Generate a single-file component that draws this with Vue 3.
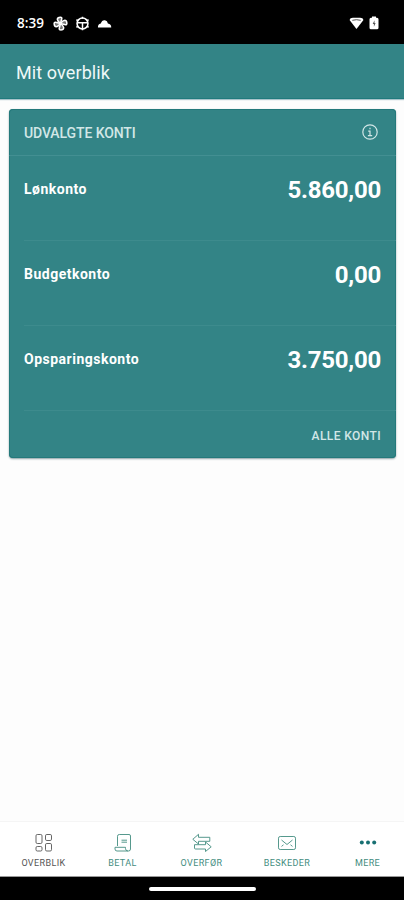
<template>
  <div class="screen">
    <header class="status-bar">
      <span class="clock">8:39</span>
      <svg class="status-icon fan" viewBox="0 0 16 16">
        <g fill="#777" stroke="#fff" stroke-width="1.6" stroke-linejoin="round">
          <path v-for="angle in [0, 90, 180, 270]" :key="angle" :transform="`rotate(${angle} 8 8)`" d="M8 8L9.4 2.6Q9.5 1.3 8 1.2Q4.6 1.2 4.6 3.6Q4.7 5.4 8 8" />
        </g>
      </svg>
      <svg class="status-icon wheel" viewBox="0 0 16 16">
        <circle cx="8" cy="8" r="5.8" fill="none" stroke="#fff" stroke-width="1.7" />
        <path d="M2.5 7.2h11M8 8v5.5M8 .8v2M1.5 4l1.7 1M14.5 4l-1.7 1M1.5 12l1.7-1M14.5 12l-1.7-1M8 13v2.2" fill="none" stroke="#fff" stroke-width="1.6" />
      </svg>
      <svg class="status-icon cloud" viewBox="0 0 16 16">
        <path d="M1 12.2Q.8 8.7 4 8Q5.3 4 8.5 4.5Q11.2 5 11.6 8Q15.2 8.4 15.2 12.2z" fill="#fff" />
      </svg>
      <span class="spacer"></span>
      <svg class="wifi" viewBox="0 0 16 14">
        <path d="M.5 3.3Q1 .8 4 .8H12Q15 .8 15.5 3.3L8 13z" fill="#fff" />
        <path d="M3.5 3.6Q8 2.2 12.5 3.6" fill="none" stroke="#444" stroke-width="1" />
      </svg>
      <svg class="battery" viewBox="0 0 10 14">
        <path d="M3 .5h4v1.2h1q1.5 0 1.5 1.5v8.6q0 1.5-1.5 1.5H2q-1.5 0-1.5-1.5V3.2q0-1.5 1.5-1.5h1z" fill="#fff" />
        <path d="M5.5 4.2L3.7 8h1.2v2.8L6.6 7H5.5z" fill="#555" />
      </svg>
    </header>

    <div class="title-bar">
      <h1>Mit overblik</h1>
    </div>

    <main class="content">
      <section class="card">
        <div class="card-header">
          <h2>UDVALGTE KONTI</h2>
          <svg class="info" viewBox="0 0 16 16">
            <circle cx="8" cy="8" r="7.2" />
            <path d="M8 3.7v1.5M6.2 7.1H8v4.4M5.9 11.6h4.3" />
          </svg>
        </div>
        <div v-for="account in accounts" :key="account.name" class="account">
          <span class="name">{{ account.name }}</span>
          <span class="amount">{{ account.amount }}</span>
        </div>
        <div class="card-footer">
          <a>ALLE KONTI</a>
        </div>
      </section>
    </main>

    <nav class="tabs">
      <a v-for="tab in tabs" :key="tab.id" class="tab" :class="{ active: tab.id === activeTab }">
        <svg class="tab-icon" viewBox="0 0 20 20">
          <g v-if="tab.id === 'overview'">
            <rect x="2" y="1.5" width="6" height="9" rx="1.3" />
            <rect x="11.5" y="1.5" width="6" height="6" rx="1.3" />
            <rect x="2" y="13.5" width="6" height="4.5" rx="1.3" />
            <rect x="11.5" y="10.5" width="6" height="7.5" rx="1.3" />
          </g>
          <g v-else-if="tab.id === 'pay'">
            <path d="M4.5 13V3.3q0-1.8 1.8-1.8H16q1.5 0 1.5 1.5v13q0 2-2 2H4q-2 0-2-2v-1.7h10.5v1.3q0 2.2 2.4 2.4" />
            <path d="M8.5 7.2h5.5M8.5 9.2h5.5" />
          </g>
          <g v-else-if="tab.id === 'transfer'">
            <path d="M6.5 1.3L.8 6.3L6.5 11V8.3H17.8V4.3H6.5z" />
            <path d="M13.5 9L19.2 13.8L13.5 18.5V16H3.5q-1 0-1-1v-3.3h11z" />
          </g>
          <g v-else-if="tab.id === 'messages'">
            <rect x="1.5" y="3.5" width="17" height="13" rx="1.7" />
            <path d="M4.5 7l5.5 4.5L15.5 7M4.5 13.4l2-1.6M15.5 13.4l-2-1.6" />
          </g>
          <g v-else class="dots">
            <circle cx="3.8" cy="9.5" r="2" />
            <circle cx="10" cy="9.5" r="2" />
            <circle cx="16.2" cy="9.5" r="2" />
          </g>
        </svg>
        <span class="tab-label">{{ tab.label }}</span>
      </a>
    </nav>

    <div class="gesture-bar">
      <span class="handle"></span>
    </div>
  </div>
</template>

<script setup>
import { ref } from 'vue'

const activeTab = ref('overview')

const accounts = [
  { name: 'Lønkonto', amount: '5.860,00' },
  { name: 'Budgetkonto', amount: '0,00' },
  { name: 'Opsparingskonto', amount: '3.750,00' }
]

const tabs = [
  { id: 'overview', label: 'OVERBLIK' },
  { id: 'pay', label: 'BETAL' },
  { id: 'transfer', label: 'OVERFØR' },
  { id: 'messages', label: 'BESKEDER' },
  { id: 'more', label: 'MERE' }
]
</script>

<style>
body {
  margin: 0;
  background: #fdfdfd;
}
</style>

<style scoped>
.screen {
  display: flex;
  flex-direction: column;
  height: 100vh;
  overflow: hidden;
  background: #fdfdfd;
  font-family: Roboto, sans-serif;
  color: #fff;
}

.status-bar {
  display: flex;
  align-items: center;
  flex: 0 0 44px;
  box-sizing: border-box;
  padding: 2px 25px 0 17px;
  background: #000;
}

.clock {
  width: 36px;
  font-family: "Open Sans", sans-serif;
  font-size: 13.5px;
  font-weight: 600;
}

.status-icon {
  width: 15px;
  height: 15px;
  margin-right: 7px;
}

.spacer {
  flex: 1;
}

.wifi {
  width: 15px;
  height: 13px;
}

.battery {
  width: 10px;
  height: 14px;
  margin-left: 5px;
}

.title-bar {
  display: flex;
  align-items: center;
  flex: 0 0 55px;
  box-sizing: border-box;
  padding: 4px 16px 0;
  background: #338486;
  border-bottom: 1px solid #207a7d;
  box-shadow: 0 1px 1px #a9c4cb;
}

h1 {
  margin: 0;
  color: #eef8f8;
  font-size: 18px;
  font-weight: 400;
  line-height: 22px;
  letter-spacing: 0.1px;
}

.content {
  flex: 1;
  padding: 10px 8px 0 9px;
}

.card {
  border-radius: 4px;
  background: #338486;
  box-shadow: inset 0 0 0 1px #24797b, 0 1px 2px rgba(0, 50, 60, 0.45);
}

.card-header {
  display: flex;
  align-items: center;
  justify-content: space-between;
  height: 46px;
  padding: 0 18px 0 15px;
  border-bottom: 1px solid #438f92;
  color: #d2e7e7;
}

h2 {
  margin: 0;
  padding-top: 1px;
  font-size: 14px;
  font-weight: 500;
  letter-spacing: -0.1px;
}

.info {
  width: 16px;
  height: 16px;
  fill: none;
  stroke: #d2e7e7;
  stroke-width: 1.2;
}

.account {
  display: flex;
  justify-content: space-between;
  height: 84px;
  margin-left: 15px;
  padding-right: 15px;
  border-bottom: 1px solid #3d8b8d;
}

.name {
  padding-top: 24px;
  font-size: 14px;
  font-weight: 700;
  line-height: 18px;
  letter-spacing: 0.5px;
}

.amount {
  padding-top: 20px;
  font-size: 24px;
  font-weight: 700;
  line-height: 28px;
  letter-spacing: -0.25px;
}

.card-footer {
  display: flex;
  align-items: center;
  justify-content: flex-end;
  height: 47px;
  padding: 2px 15px 0;
  box-sizing: border-box;
  color: #d2e7e7;
  font-size: 12px;
  font-weight: 500;
  letter-spacing: 0.4px;
}

.tabs {
  display: grid;
  grid-template-columns: 83fr 75fr 83fr 88fr 73fr;
  flex: 0 0 56px;
  box-sizing: border-box;
  padding-left: 2px;
  border-top: 1px solid #f5f5f5;
  border-bottom: 1px solid #999;
  background: #fff;
}

.tab {
  display: flex;
  flex-direction: column;
  align-items: center;
  padding-top: 11px;
  color: #438d80;
}

.tab.active {
  color: #555;
}

.tab-icon {
  width: 20px;
  height: 20px;
  fill: none;
  stroke: currentColor;
  stroke-width: 0.9;
}

.dots {
  fill: #176f72;
  stroke: none;
}

.tab-label {
  margin-top: 5px;
  font-size: 9px;
  line-height: 11px;
  letter-spacing: 0.4px;
}

.gesture-bar {
  display: flex;
  flex: 0 0 23px;
  align-items: center;
  justify-content: center;
  background: #000;
}

.handle {
  width: 107px;
  height: 4px;
  border-radius: 2px;
  background: #fff;
}
</style>
